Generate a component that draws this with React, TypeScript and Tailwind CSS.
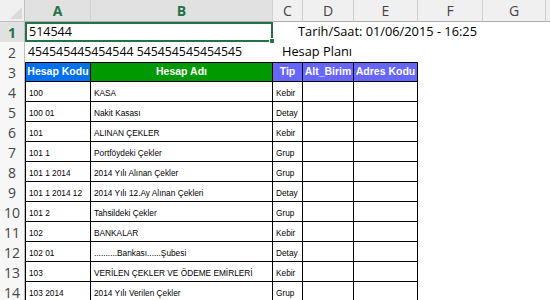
import React from "react";

const cols = ["A", "B", "C", "D", "E", "F", "G"];

const rows: [string, string, string][] = [
  ["100", "KASA", "Kebir"],
  ["100 01", "Nakit Kasası", "Detay"],
  ["101", "ALINAN ÇEKLER", "Kebir"],
  ["101 1", "Portföydeki Çekler", "Grup"],
  ["101 1 2014", "2014 Yılı Alınan Çekler", "Grup"],
  ["101 1 2014 12", "2014 Yılı 12.Ay Alınan Çekleri", "Detay"],
  ["101 2", "Tahsildeki Çekler", "Grup"],
  ["102", "BANKALAR", "Kebir"],
  ["102 01", "..........Bankası......Şubesi", "Detay"],
  ["103", "VERİLEN ÇEKLER VE ÖDEME EMİRLERİ", "Kebir"],
  ["103 2014", "2014 Yılı Verilen Çekler", "Grup"],
];

function RowHead({ n, active }: { n: number; active?: boolean }) {
  return (
    <div
      className={
        "flex items-center justify-center border-r border-[#bfbfbf] text-[14px] font-['Open_Sans',sans-serif] " +
        (active ? "bg-[#e1e1e1] text-[#217346] font-bold" : "bg-[#f7f7f7] text-[#444]")
      }
    >
      {n}
    </div>
  );
}

function DataCell({ text, first }: { text: string; first?: boolean }) {
  return (
    <div
      className={
        "flex items-end pb-[3px] pl-[3px] border-r border-b border-black bg-white text-[8.3px] leading-[10px] text-black whitespace-nowrap overflow-hidden font-['Liberation_Sans',Arial,sans-serif] " +
        (first ? "border-l" : "")
      }
    >
      {text}
    </div>
  );
}

function HeadCell({ label, bg, first }: { label: string; bg: string; first?: boolean }) {
  return (
    <div
      className={
        "flex items-center justify-center border-y border-r border-black text-white font-bold text-[10.5px] whitespace-nowrap font-['Liberation_Sans',Arial,sans-serif] " +
        bg +
        (first ? " border-l" : "")
      }
    >
      {label}
    </div>
  );
}

export default function App() {
  return (
    <div className="w-[550px] h-[300px] overflow-hidden bg-white select-none">
      <div className="grid grid-cols-[25px_66px_182px_30px_51px_64px_65px_63px_4px] grid-rows-[22px_repeat(14,20px)]">
        {/* column letters */}
        <div className="relative bg-[#f0f0f0] border-r border-b border-[#bfbfbf]">
          <svg className="absolute right-[2px] bottom-[2px]" width="12" height="12" viewBox="0 0 12 12">
            <polygon points="12,0 12,12 0,12" fill="#dadada" />
          </svg>
        </div>
        {cols.map((c, i) => (
          <div
            key={c}
            className={
              "flex items-center justify-center border-r border-b border-[#d0d0d0] border-b-[#ababab] text-[14px] font-['Open_Sans',sans-serif] " +
              (i < 2 ? "bg-[#e1e1e1] text-[#217346] font-bold" : "bg-[#f0f0f0] text-[#444]")
            }
          >
            {c}
          </div>
        ))}
        <div className="bg-[#f0f0f0] border-b border-[#ababab]" />

        {/* row 1 */}
        <RowHead n={1} active />
        <div className="relative col-span-2 border-2 border-[#217346] flex items-center pl-[2px] text-[12.5px] text-black font-['Open_Sans',sans-serif]">
          514544
          <div className="absolute right-[-4px] bottom-[-4px] w-[6px] h-[6px] bg-[#217346] border border-white" />
        </div>
        <div className="col-span-6 flex items-center pl-[25px] text-[12.8px] text-black whitespace-nowrap font-['Open_Sans',sans-serif]">
          Tarih/Saat: 01/06/2015 - 16:25
        </div>

        {/* row 2 */}
        <RowHead n={2} />
        <div className="col-span-2 flex items-center pl-[3px] text-[12.3px] text-black whitespace-nowrap font-['Open_Sans',sans-serif]">
          454545445454544 545454545454545
        </div>
        <div className="col-span-6 flex items-center pl-[9px] text-[12.8px] text-black whitespace-nowrap font-['Open_Sans',sans-serif]">
          Hesap Planı
        </div>

        {/* row 3 */}
        <RowHead n={3} />
        <HeadCell label="Hesap Kodu" bg="bg-[#0070f0]" first />
        <HeadCell label="Hesap Adı" bg="bg-[#009900]" />
        <HeadCell label="Tip" bg="bg-[#6666ff]" />
        <HeadCell label="Alt_Birim" bg="bg-[#6666ff]" />
        <HeadCell label="Adres Kodu" bg="bg-[#6666ff]" />
        <div className="col-span-3" />

        {rows.map((r, i) => (
          <React.Fragment key={i}>
            <RowHead n={i + 4} />
            <DataCell text={r[0]} first />
            <DataCell text={r[1]} />
            <DataCell text={r[2]} />
            <DataCell text="" />
            <DataCell text="" />
            <div className="col-span-3" />
          </React.Fragment>
        ))}
      </div>
    </div>
  );
}
